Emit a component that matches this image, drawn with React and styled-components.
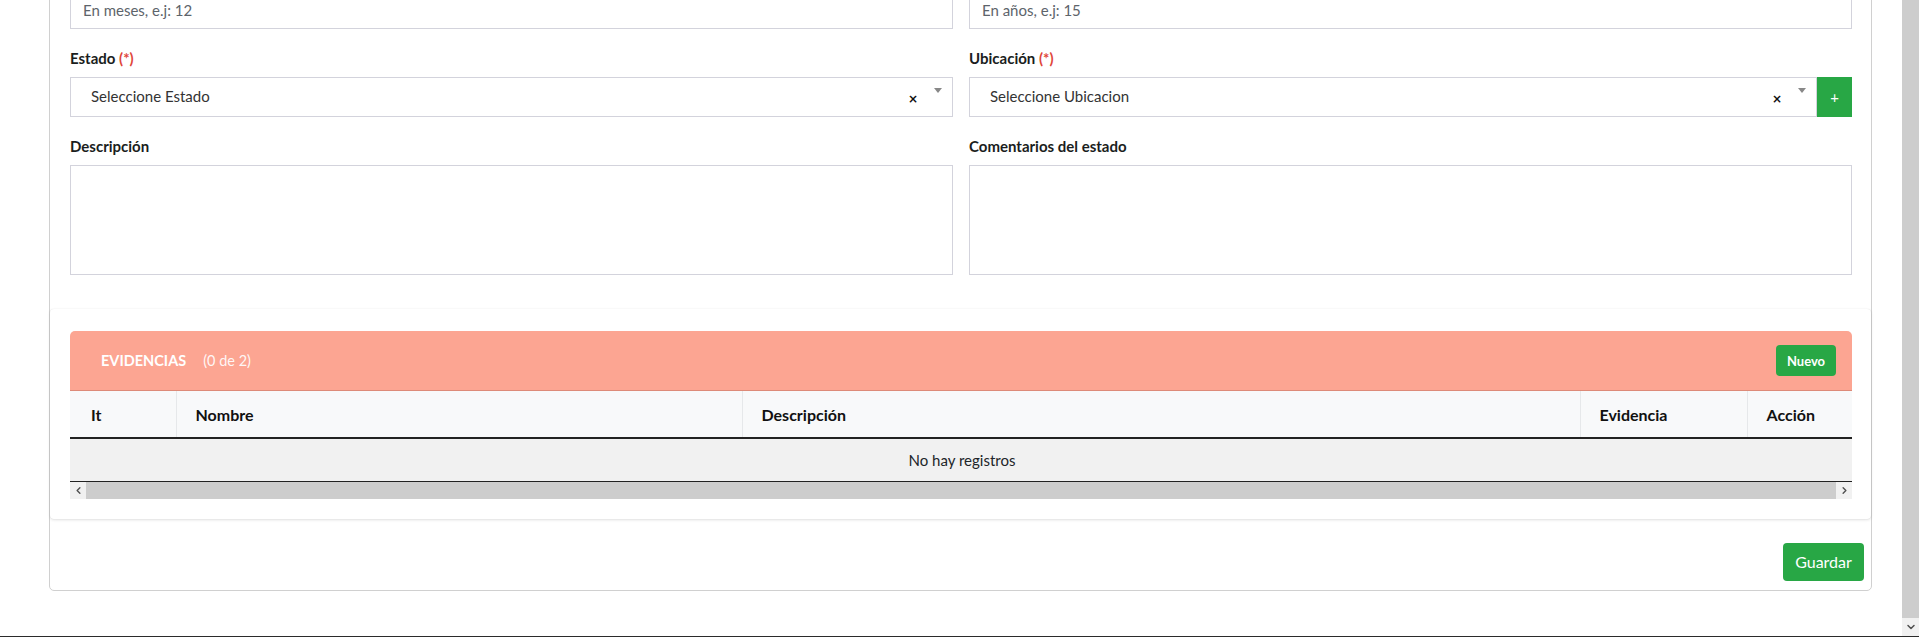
import React from "react";
import styled, { createGlobalStyle } from "styled-components";
import { ChevronLeft, ChevronRight, ChevronDown } from "lucide-react";

const GlobalStyle = createGlobalStyle`
  html, body {
    margin: 0;
    padding: 0;
    background: #fff;
    overflow: hidden;
  }
  body {
    font-family: Lato, "Liberation Sans", sans-serif;
    color: #212529;
  }
  * {
    box-sizing: border-box;
  }
`;

const columns = [
  { key: "it", label: "It", width: 106 },
  { key: "nombre", label: "Nombre", width: 566 },
  { key: "descripcion", label: "Descripción", width: 838 },
  { key: "evidencia", label: "Evidencia", width: 167 },
  { key: "accion", label: "Acción", width: 107 },
];

const App = () => {
  return (
    <>
      <GlobalStyle />
      <Screen>
        <Viewport>
          <Main>
            <Card>
              <Form>
                <Row>
                  <Field>
                    <Input placeholder="En meses, e.j: 12" readOnly />
                  </Field>
                  <Field>
                    <Input placeholder="En años, e.j: 15" readOnly />
                  </Field>
                </Row>
                <Row>
                  <Field>
                    <Label>
                      Estado <Required>(*)</Required>
                    </Label>
                    <SelectGroup>
                      <SelectBox>
                        <SelectText>Seleccione Estado</SelectText>
                        <Clear>×</Clear>
                        <Arrow />
                      </SelectBox>
                    </SelectGroup>
                  </Field>
                  <Field>
                    <Label>
                      Ubicación <Required>(*)</Required>
                    </Label>
                    <SelectGroup>
                      <SelectBox>
                        <SelectText>Seleccione Ubicacion</SelectText>
                        <Clear>×</Clear>
                        <Arrow />
                      </SelectBox>
                      <AddButton>+</AddButton>
                    </SelectGroup>
                  </Field>
                </Row>
                <Row>
                  <Field>
                    <Label>Descripción</Label>
                    <TextArea readOnly />
                  </Field>
                  <Field>
                    <Label>Comentarios del estado</Label>
                    <TextArea readOnly />
                  </Field>
                </Row>
              </Form>

              <InnerCard>
                <EvCard>
                  <EvHeader>
                    <EvTitle>EVIDENCIAS</EvTitle>
                    <EvCount>(0 de 2)</EvCount>
                    <SmallButton>Nuevo</SmallButton>
                  </EvHeader>
                  <TableWrap>
                    <Table>
                      <colgroup>
                        {columns.map((c) => (
                          <col key={c.key} style={{ width: c.width }} />
                        ))}
                      </colgroup>
                      <thead>
                        <tr>
                          {columns.map((c) => (
                            <Th key={c.key} $first={c.key === "it"}>
                              {c.label}
                            </Th>
                          ))}
                        </tr>
                      </thead>
                      <tbody>
                        <tr>
                          <EmptyCell colSpan={columns.length}>
                            No hay registros
                          </EmptyCell>
                        </tr>
                      </tbody>
                    </Table>
                  </TableWrap>
                  <HScroll>
                    <ScrollBtn>
                      <ChevronLeft size={11} strokeWidth={3} />
                    </ScrollBtn>
                    <HThumb />
                    <ScrollBtn>
                      <ChevronRight size={11} strokeWidth={3} />
                    </ScrollBtn>
                  </HScroll>
                </EvCard>
              </InnerCard>

              <Footer>
                <SaveButton>Guardar</SaveButton>
              </Footer>
            </Card>
          </Main>
          <VScroll>
            <VThumb />
            <VScrollBtn>
              <ChevronDown size={12} strokeWidth={3} />
            </VScrollBtn>
          </VScroll>
        </Viewport>
      </Screen>
    </>
  );
};

const Screen = styled.div`
  height: 637px;
  display: flex;
  flex-direction: column;
`;

const Viewport = styled.div`
  flex: 1;
  min-height: 0;
  display: flex;
  border-bottom: 1px solid #2b2b2b;
`;

const Main = styled.div`
  flex: 1;
  overflow: hidden;
  padding: 0 30px 0 49px;
`;

const Card = styled.div`
  margin-top: -40px;
  border: 1px solid #d0d0d0;
  border-radius: 5px;
  background: #fff;
`;

const Form = styled.div`
  padding: 30px 19px 15px 20px;
`;

const Row = styled.div`
  display: grid;
  grid-template-columns: 1fr 1fr;
  column-gap: 16px;
`;

const Field = styled.div`
  margin-bottom: 19px;
`;

const Label = styled.label`
  display: block;
  font-size: 15px;
  font-weight: 700;
  line-height: 21px;
  margin-bottom: 8px;
  color: #1a1d20;
`;

const Required = styled.span`
  color: #e0463a;
`;

const Input = styled.input`
  display: block;
  width: 100%;
  height: 38px;
  border: 1px solid #d3d3dc;
  padding: 0 12px;
  font-family: inherit;
  font-size: 15px;
  color: #495057;
  outline: none;
  &::placeholder {
    color: #5d646b;
  }
`;

const SelectGroup = styled.div`
  display: flex;
`;

const SelectBox = styled.div`
  flex: 1;
  height: 40px;
  display: flex;
  align-items: center;
  border: 1px solid #d3d3dc;
  padding: 0 10px 3px 20px;
`;

const SelectText = styled.span`
  flex: 1;
  font-size: 15px;
  color: #333;
`;

const Clear = styled.span`
  font-family: "DejaVu Sans", sans-serif;
  font-size: 12px;
  font-weight: 700;
  color: #111;
  margin: 6px 16px 0 0;
`;

const Arrow = styled.span`
  align-self: flex-start;
  margin-top: 10px;
  width: 0;
  height: 0;
  border-left: 4px solid transparent;
  border-right: 4px solid transparent;
  border-top: 5px solid #888;
`;

const AddButton = styled.button`
  width: 35px;
  height: 40px;
  border: none;
  background: #28a745;
  color: #fff;
  font-size: 15px;
  font-family: inherit;
  padding: 0;
`;

const TextArea = styled.textarea`
  display: block;
  width: 100%;
  height: 110px;
  border: 1px solid #d3d3dc;
  resize: none;
  outline: none;
`;

const InnerCard = styled.div`
  padding: 22px 19px 20px 20px;
  border-radius: 4px;
  background: #fff;
  box-shadow: 0 0 1px rgba(0, 0, 0, 0.1), 0 1px 3px rgba(0, 0, 0, 0.12);
`;

const EvCard = styled.div`
  border-radius: 5px 5px 0 0;
  overflow: hidden;
`;

const EvHeader = styled.div`
  height: 60px;
  display: flex;
  align-items: center;
  padding: 0 16px 0 31px;
  background: #fca592;
  border-bottom: 1px solid #dd8a78;
  color: #fff;
`;

const EvTitle = styled.span`
  font-size: 14.5px;
  font-weight: 700;
`;

const EvCount = styled.span`
  font-size: 14.5px;
  margin-left: 17px;
  color: rgba(255, 255, 255, 0.92);
`;

const SmallButton = styled.button`
  margin-left: auto;
  width: 60px;
  height: 31px;
  border: none;
  border-radius: 4px;
  background: #28a745;
  color: #fff;
  font-family: inherit;
  font-size: 13px;
  font-weight: 700;
`;

const TableWrap = styled.div`
  overflow: hidden;
`;

const Table = styled.table`
  width: 1784px;
  table-layout: fixed;
  border-collapse: collapse;
`;

const Th = styled.th`
  height: 47px;
  padding: 0 19px 0 ${(p) => (p.$first ? "21px" : "19px")};
  text-align: left;
  font-size: 16px;
  font-weight: 700;
  color: #111;
  background: #f8f9fa;
  border-left: ${(p) => (p.$first ? "none" : "1px solid #e6e8ea")};
  border-bottom: 2px solid #222;
`;

const EmptyCell = styled.td`
  height: 43px;
  text-align: center;
  font-size: 15px;
  color: #212529;
  background: #f1f1f1;
  border-bottom: 1px solid #222;
`;

const HScroll = styled.div`
  display: flex;
  height: 17px;
  background: #cdcdcd;
`;

const ScrollBtn = styled.div`
  width: 16px;
  display: flex;
  align-items: center;
  justify-content: center;
  background: #f1f1f1;
  color: #505050;
`;

const HThumb = styled.div`
  flex: 1;
  background: #cdcdcd;
`;

const Footer = styled.div`
  display: flex;
  justify-content: flex-end;
  padding: 24px 7px 9px;
`;

const SaveButton = styled.button`
  width: 81px;
  height: 38px;
  border: none;
  border-radius: 4px;
  background: #28a745;
  color: #fff;
  font-family: inherit;
  font-size: 16px;
`;

const VScroll = styled.div`
  width: 17px;
  display: flex;
  flex-direction: column;
  background: #f1f1f1;
`;

const VThumb = styled.div`
  flex: 1;
  background: #cdcdcd;
`;

const VScrollBtn = styled.div`
  height: 18px;
  display: flex;
  align-items: center;
  justify-content: center;
  color: #505050;
`;

export default App;
